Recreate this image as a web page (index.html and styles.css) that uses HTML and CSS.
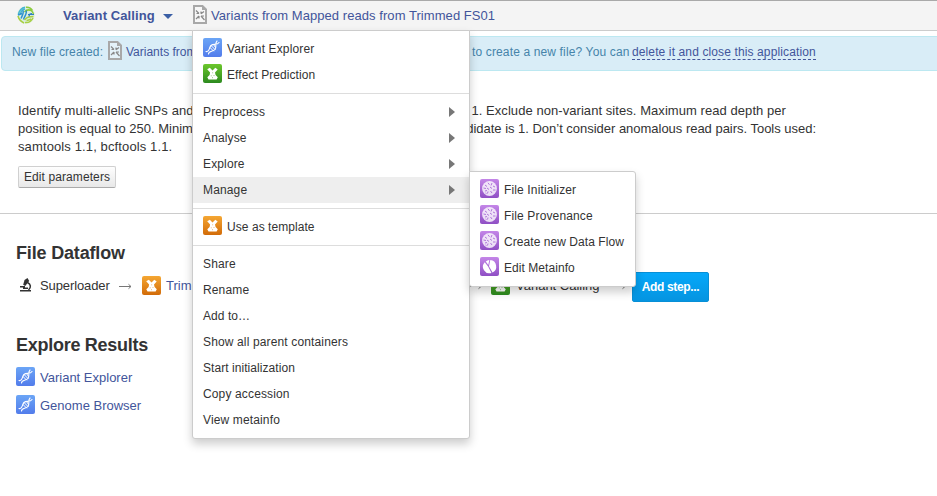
FILE: index.html
```html
<!DOCTYPE html>
<html lang="en">
<head>
<meta charset="utf-8">
<title>Variant Calling</title>
<link rel="stylesheet" href="styles.css">
</head>
<body>
<svg class="defs" aria-hidden="true">
  <defs>
    <linearGradient id="g-blue" x2="0" y2="1"><stop stop-color="#6ba5f6"/><stop offset="1" stop-color="#527ceb"/></linearGradient>
    <linearGradient id="g-green" x2="0" y2="1"><stop stop-color="#6cc72c"/><stop offset="1" stop-color="#2c8a1f"/></linearGradient>
    <linearGradient id="g-orange" x2="0" y2="1"><stop stop-color="#f5a733"/><stop offset="1" stop-color="#d26b08"/></linearGradient>
    <linearGradient id="g-purple" x2="0" y2="1"><stop stop-color="#c486e8"/><stop offset="1" stop-color="#8f4fc4"/></linearGradient>
    <symbol id="dna" viewBox="0 0 19 19">
      <rect width="19" height="19" rx="2" fill="url(#g-blue)"/>
      <g fill="none" stroke="#fff" stroke-width="1.100" stroke-linecap="round">
        <path d="M3 13.500C7 14.500 5.500 10 8 7.500 10.500 5 14 8 16 4.500M5.500 16C5.500 12.500 10 14 12 11.500 14 9 11.500 5.500 14 3"/>
        <path d="M7 9.500l3.500 3.500M8 7.500l4 4M10.500 6.500l2 3" stroke-width="1"/>
      </g>
    </symbol>
    <symbol id="mill" viewBox="0 0 19 19">
      <path d="M4.200 5.200L6.800 3.800 9.500 6.500 12.300 3.800 14.700 5.400 12 8.600 12.600 11 14.800 13.300 13.600 15.500H5.500L4.300 13.300 6.600 11 7.100 8.600z" fill="#fff"/>
      <path d="M9.300 8.800h.8M7.800 11.800h.8M10.600 11.500h.8M9.200 13.700h.8" stroke="currentColor" stroke-width=".7"/>
    </symbol>
    <symbol id="green" viewBox="0 0 19 19"><rect width="19" height="19" rx="2" fill="url(#g-green)"/><use href="#mill"/></symbol>
    <symbol id="orange" viewBox="0 0 19 19"><rect width="19" height="19" rx="2" fill="url(#g-orange)"/><use href="#mill"/></symbol>
    <symbol id="tangle" viewBox="0 0 19 19">
      <rect width="19" height="19" rx="2" fill="url(#g-purple)"/>
      <circle cx="9.500" cy="9.500" r="7.400" fill="#fff" fill-opacity=".8"/>
      <path d="M5 6l2 1.500M8 3.800l1.500 2M12 4l-1 2.500M13 7l2 1M3.500 9l2.500.5M7 9l2 1.500M10 8l2 1.500M5 12l2-.5M8 12.500l-.5 2M10.500 12l1.500 2M13 11h2.500M5.500 14l1 .5" stroke="#a86bd6" stroke-width=".9"/>
    </symbol>
    <symbol id="pie" viewBox="0 0 19 19">
      <rect width="19" height="19" rx="2" fill="url(#g-purple)"/>
      <path d="M10.300 3A6.600 6.600 0 0 1 12.500 15.500L9 9.300zM9.300 3.100L8.300 8 5.800 4.600Q7.400 3.300 9.300 3.100zM4.700 5.300l3.400 4.200 3.400 6.400A6.500 6.500 0 0 1 4.700 5.300z" fill="#fff"/>
    </symbol>
    <symbol id="file" viewBox="0 0 14 19">
      <path d="M1 1h8.500L13 4.500V18H1z" fill="#fff" fill-opacity=".3" stroke="#a8a8a8" stroke-width="2"/>
      <path d="M9 1v4h4z" fill="#a8a8a8"/>
      <path d="M3 5.500l3 3M3.500 8.500h2.500M11 6.500l-3 2.300M8 6.500v2.300M6 11l-3 3M6 11v2.500M8 11l3.500 4M8 11h3" fill="none" stroke="#888" stroke-width="1.200"/>
    </symbol>
    <symbol id="arrow" viewBox="0 0 13 7">
      <path d="M0 3.500h12M9.500 1.300l2.500 2.200-2.500 2.200" fill="none" stroke="#777" stroke-width="1"/>
    </symbol>
  </defs>
</svg>

<header class="topbar">
  <svg class="logo" viewBox="0 0 18 18">
    <circle cx="9" cy="9" r="8.700" fill="#dceee0"/>
    <g fill="none" stroke-width="1.500">
      <path d="M1.500 8C2.500 4 5 1.800 8 1.200M3.500 8C4 5 6 3.500 8 3" stroke="#43b3d3"/>
      <path d="M9 1.200c3-.3 5.500 1.500 6.500 3.500M7.500 6c2-2.500 4.500-2.500 7-1.500M14 4.500c1.500 1 2 2 2.500 3.500" stroke="#8ccb3d"/>
      <path d="M6 4.500c1 2-.5 5-2 8M9 4.500c1.500 2-1 5-2.500 9M1 9l4-1.500" stroke="#2d91d0"/>
      <path d="M1 10c1 4 3 5.500 6 7M7.500 14c2.500-4 5-3 9-3.500M8 16.500c4 .5 6.500-1.500 8-4.500M9.500 14.500c2 0 3-1 4.500-1.500" stroke="#a9cf43"/>
      <path d="M11 8.500h6M12 10.500c0-2 1-3 3-3" stroke="#2e7fc1" stroke-width="1.200"/>
    </g>
  </svg>
  <a class="app-name">Variant Calling</a>
  <i class="caret"></i>
  <svg class="file"><use href="#file"/></svg>
  <a class="file-name">Variants from Mapped reads from Trimmed FS01</a>
</header>

<div class="notice">
  <span class="created">New file created:</span>
  <svg class="file"><use href="#file"/></svg>
  <a class="notice-file">Variants from</a>
  <span class="question">to create a new file? You can</span>
  <a class="delete">delete it and close this application</a>
</div>

<section class="description">
  <div class="line first"><span class="wide">Identify multi-allelic SNPs and</span><span class="exclude">1. Exclude non-variant sites. Maximum read depth per</span></div>
  <div class="line"><span>position is equal to 250. Minimum</span><span class="candidate">candidate is 1. Don’t consider anomalous read pairs. Tools used:</span></div>
  <div class="line"><span class="wide">samtools 1.1, bcftools 1.1.</span></div>
  <button class="edit">Edit parameters</button>
</section>

<main>
  <h2>File Dataflow</h2>
  <div class="flow">
    <svg class="scope" viewBox="0 0 14 14">
      <path d="M5.500 2L8.500 0l1.700 3-4 5-2-1.200z" fill="#333"/>
      <path d="M8.500 4.500c3.500 1.500 3.800 5 1 7.500M1 12.800h11M1 8.800h5M4 10.300h5" fill="none" stroke="#333" stroke-width="1.500"/>
    </svg>
    <span class="superloader">Superloader</span>
    <svg class="arrow"><use href="#arrow"/></svg>
    <svg class="icon orange"><use href="#orange"/></svg>
    <a class="trim">Trim</a>
    <svg class="arrow"><use href="#arrow"/></svg>
    <svg class="icon green"><use href="#green"/></svg>
    <span class="calling">Variant Calling</span>
    <svg class="arrow third"><use href="#arrow"/></svg>
    <button class="add">Add step...</button>
  </div>
  <h2 class="results-title">Explore Results</h2>
  <div class="results">
    <a><svg class="icon"><use href="#dna"/></svg><span>Variant Explorer</span></a>
    <a><svg class="icon"><use href="#dna"/></svg><span>Genome Browser</span></a>
  </div>
</main>

<nav class="menu main-menu">
  <ul>
    <li><svg class="icon"><use href="#dna"/></svg>Variant Explorer</li>
    <li class="tight"><svg class="icon green"><use href="#green"/></svg>Effect Prediction</li>
  </ul>
  <ul>
    <li class="sub">Preprocess</li>
    <li class="sub">Analyse</li>
    <li class="sub">Explore</li>
    <li class="sub active">Manage</li>
  </ul>
  <ul>
    <li class="tight"><svg class="icon orange"><use href="#orange"/></svg>Use as template</li>
  </ul>
  <ul>
    <li>Share</li>
    <li>Rename</li>
    <li class="tight">Add to…</li>
    <li>Show all parent containers</li>
    <li class="tight">Start initialization</li>
    <li>Copy accession</li>
    <li>View metainfo</li>
  </ul>
</nav>

<nav class="menu side-menu">
  <ul>
    <li><svg class="icon"><use href="#tangle"/></svg>File Initializer</li>
    <li><svg class="icon"><use href="#tangle"/></svg>File Provenance</li>
    <li class="tight"><svg class="icon"><use href="#tangle"/></svg>Create new Data Flow</li>
    <li class="tight"><svg class="icon"><use href="#pie"/></svg>Edit Metainfo</li>
  </ul>
</nav>
</body>
</html>
```
FILE: styles.css
```css
* { box-sizing: border-box; }
body {
  margin: 0;
  height: 496px;
  overflow: hidden;
  background: #fff;
  color: #333;
  font-family: "Liberation Sans", Arial, sans-serif;
  font-size: 13px;
}
svg { display: block; flex: none; }
a { color: #42559b; }
span, a { white-space: nowrap; }
.defs { position: absolute; width: 0; height: 0; }
.icon { width: 19px; height: 19px; }
.file { width: 14px; height: 19px; }
.green { color: #4aa529; }
.orange { color: #e38a1e; }

.topbar {
  display: flex;
  align-items: center;
  height: 31px;
  padding: 0 0 1px 17px;
  background: #f4f4f4;
  border-top: 1px solid #a9a9a9;
  border-bottom: 1px solid #ccc;
}
.topbar .file { margin-bottom: 2px; }
.logo { width: 18px; height: 18px; }
.app-name { width: 92px; margin-left: 28px; font-weight: bold; letter-spacing: .1px; }
.caret {
  margin: 2px 20px 0 8px;
  border: 5px solid transparent;
  border-top-color: #3b5fa5;
  border-bottom: 0;
}
.file-name { margin-left: 4px; letter-spacing: .06px; }

.notice {
  display: flex;
  align-items: center;
  height: 35px;
  margin: 5px -5px 0 1px;
  padding: 0 0 4px 10px;
  color: #4684aa;
  font-size: 12px;
  background: #d9edf7;
  border: 1px solid #bce8f1;
  border-radius: 4px;
}
.created { width: 91px; letter-spacing: .1px; }
.notice .file { margin: 0 4px 2px 5px; }
.notice-file { width: 346px; }
.question { width: 160px; letter-spacing: .14px; }
.delete { padding-top: 1px; border-bottom: 1px dashed #42559b; letter-spacing: .12px; }

.description { height: 142px; padding: 31px 0 0 18px; }
.line { display: flex; justify-content: space-between; width: 798px; line-height: 18px; }
.first { width: 768px; }
.wide { letter-spacing: .12px; }
.exclude { letter-spacing: .06px; }
.candidate { letter-spacing: -.02px; }
button { font-family: inherit; padding: 0; }
.edit {
  width: 98px;
  height: 22px;
  margin-top: 10px;
  color: #333;
  font-size: 12px;
  letter-spacing: .1px;
  background: linear-gradient(#fefefe, #e8e8e8);
  border: 1px solid #d0d0d0;
  border-bottom-color: #aaa;
  border-radius: 2px;
}

main { padding: 28px 0 0 16px; border-top: 1px solid #ccc; }
h2 { margin: 0; font-size: 18px; line-height: 22px; letter-spacing: -.17px; }
.flow { display: flex; align-items: center; height: 26px; margin-top: 8px; }
.scope { width: 14px; height: 14px; margin-left: 3px; }
.superloader { width: 70px; margin-left: 7px; letter-spacing: -.1px; }
.arrow { width: 13px; height: 7px; margin: 2px 1px 0 9px; }
.flow .orange { margin: 0 5px 0 9px; }
.trim { width: 294px; }
.flow .green { margin: 0 6px 0 8px; }
.calling { width: 84px; }
.flow .third { margin-left: 13px; }
.add {
  align-self: flex-start;
  height: 30px;
  width: 77px;
  margin-left: 5px;
  color: #fff;
  font-size: 12px;
  font-weight: bold;
  letter-spacing: -.35px;
  background: linear-gradient(#05a8fa, #0594e0);
  border: 1px solid #078fd6;
  border-radius: 2px;
}
.results-title { margin-top: 36px; letter-spacing: -.27px; }
.results { display: grid; gap: 9px; margin-top: 11px; }
.results a { display: flex; align-items: center; gap: 5px; height: 19px; }
.results span { padding-top: 2px; }

.menu {
  position: absolute;
  z-index: 2;
  background: #fff;
  border: 1px solid #ccc;
  border-radius: 0 0 3px 3px;
  box-shadow: 0 5px 10px rgba(0, 0, 0, .2);
  font-size: 12px;
}
.main-menu { left: 192px; top: 30px; width: 278px; }
.menu ul { list-style: none; margin: 0; padding: 5px 0; }
.menu ul + ul { border-top: 1px solid #ddd; }
.menu li {
  display: flex;
  align-items: center;
  gap: 5px;
  height: 26px;
  padding: 0 14px 0 10px;
  letter-spacing: .14px;
  white-space: nowrap;
}
.menu .tight { letter-spacing: .06px; }
.menu .icon { margin-bottom: 3px; }
.sub::after {
  content: "";
  margin-left: auto;
  border: 5px solid transparent;
  border-left: 6px solid #777;
  border-right: 0;
}
.menu .active { background: #eee; }
.side-menu { left: 469px; top: 171px; width: 167px; z-index: 3; border-radius: 0 3px 3px 3px; }
.side-menu li { padding-right: 5px; }
```
